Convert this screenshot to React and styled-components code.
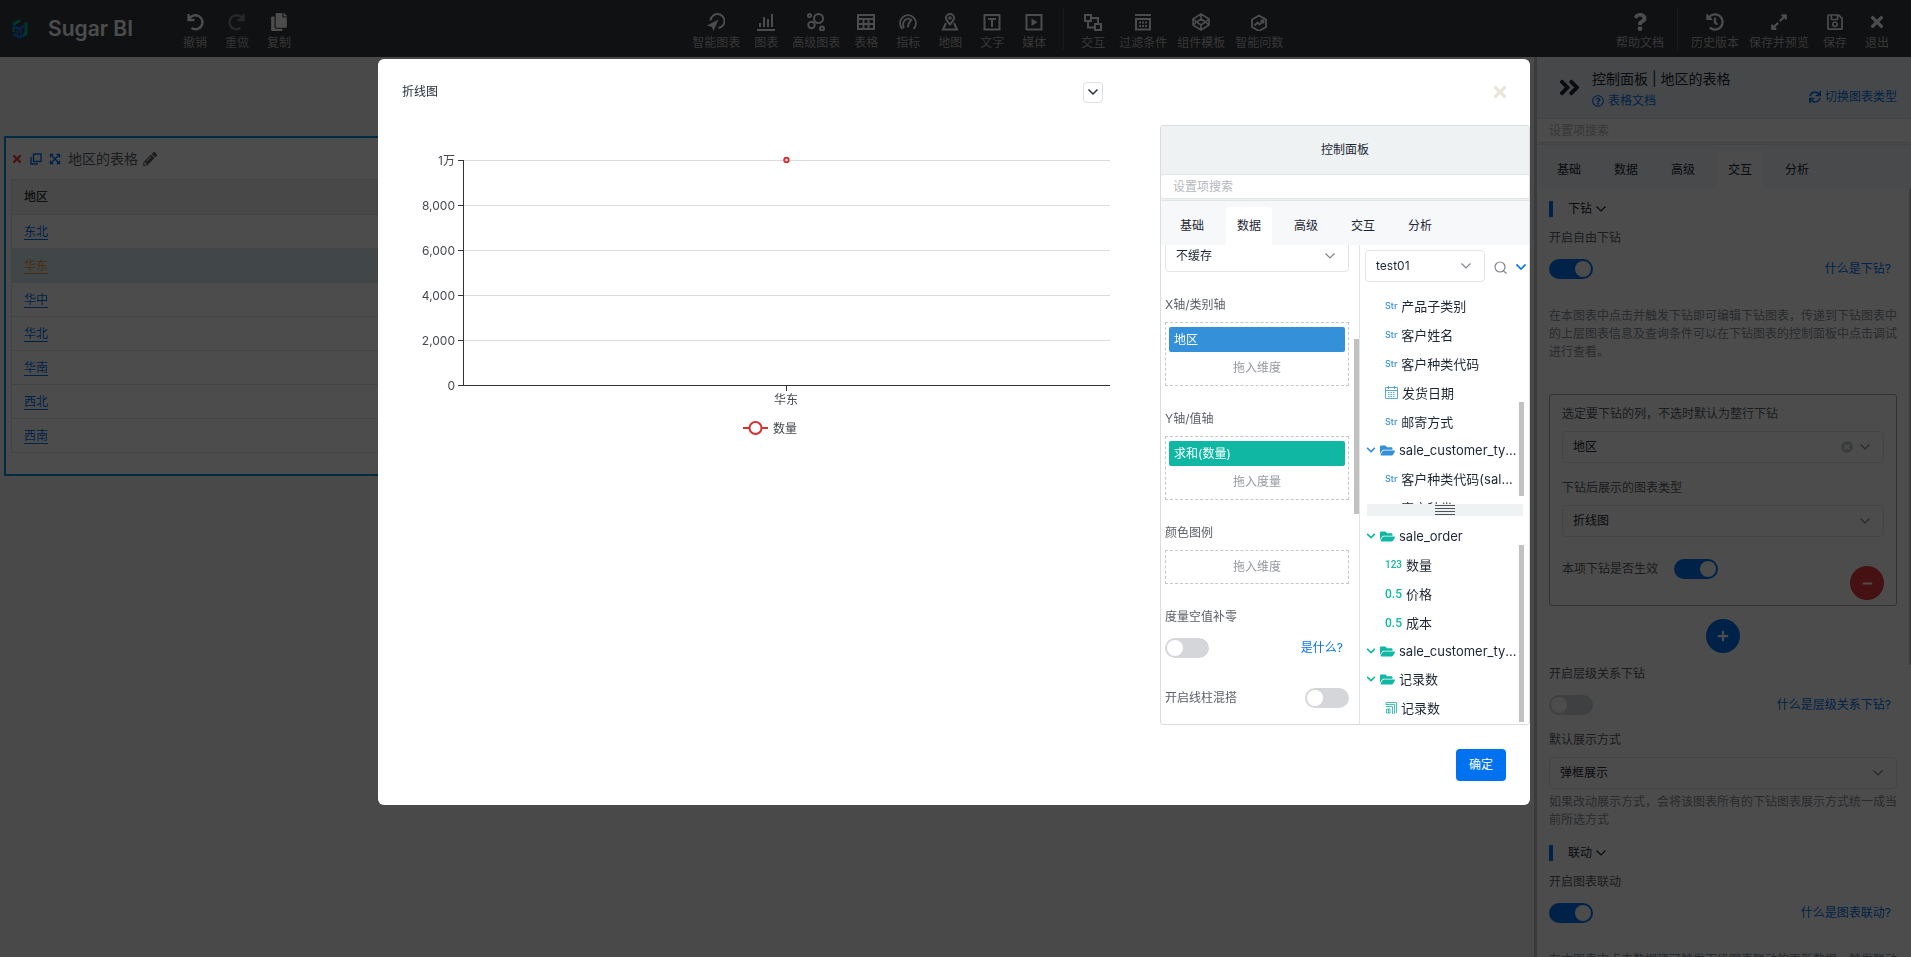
import styled, { createGlobalStyle, css } from 'styled-components';
import {
    FaAngleDoubleRight, FaChevronDown, FaCopy, FaExpandAlt, FaExpandArrowsAlt, FaFolderOpen, FaHistory,
    FaMinus, FaPencilAlt, FaPlus, FaQuestion, FaRegQuestionCircle, FaRegSave, FaSync, FaTimes, FaTimesCircle
} from 'react-icons/fa';

const GlobalStyle = createGlobalStyle`
    :root {
        --blue: #0072f0;
        --dim: #3490d8;
        --measure: #10b8a4;
        --text: #1d2633;
        --muted: #5c6067;
        --line: #e2e5e8;
        --fs-sm: 12px;
        --fs-md: 13px;
        --fs-lg: 14px;
    }

    *, *::before, *::after {
        box-sizing: border-box;
    }

    body {
        margin: 0;
        overflow: hidden;
        color: var(--text);
        font-family: Inter, 'Noto Sans CJK SC', sans-serif;
        font-size: var(--fs-sm);
        line-height: 18px;
    }

    button, input, select {
        margin: 0;
        padding: 0;
        border: 0;
        background: none;
        color: inherit;
        font: inherit;
    }

    a {
        color: var(--blue);
        text-decoration: none;
    }

    svg {
        display: block;
        flex: none;
    }
`;

const Page = styled.div`
    display: flex;
    flex-direction: column;
    height: 100vh;
    background: #f4f4f4;
`;

const TopBar = styled.header`
    display: flex;
    align-items: center;
    flex: none;
    height: 57px;
    padding: 0 13px 0 12px;
    background: #36393d;
    color: #fff;
`;

const Brand = styled.div`
    display: flex;
    align-items: center;
    gap: 20px;
    width: 162px;
    font-size: 21px;
    font-weight: 600;
    line-height: 26px;
    white-space: nowrap;
`;

const ToolGroup = styled.div`
    display: flex;
`;

const Gap = styled.div`
    flex: ${({ $grow }) => $grow} 1 0;
`;

const Tool = styled.button`
    display: flex;
    flex-direction: column;
    align-items: center;
    gap: 3px;
    min-width: 42px;
    padding: 7px 5px 0;
    color: ${({ $off }) => ($off ? '#888' : '#fff')};
    white-space: nowrap;

    svg {
        width: 18px;
        height: 18px;
    }
`;

const ToolLabel = styled.span`
    color: ${({ $off }) => ($off ? '#a4a4a4' : '#b8b8b8')};
`;

const ToolDivider = styled.span`
    width: 1px;
    height: 42px;
    margin: 0 8px;
    background: #595c60;
`;

const Main = styled.main`
    display: flex;
    flex: 1;
    min-height: 0;
`;

const Canvas = styled.section`
    flex: 1;
    min-width: 0;
    padding: 79px 12px 0 4px;
`;

const ChartCard = styled.article`
    height: 340px;
    padding: 10px 5px;
    border: 2px solid #0090e0;
    background: #fff;
`;

const CardHead = styled.div`
    display: flex;
    align-items: center;
    height: 21px;
    margin-bottom: 10px;
    font-size: var(--fs-lg);
    color: var(--muted);
`;

const IconButton = styled.button`
    display: flex;
    align-items: center;
    width: 19px;
    color: ${({ $color }) => $color};
`;

const CardTitle = styled.span`
    margin-right: 5px;
`;

const Table = styled.table`
    width: 100%;
    border: 1px solid #e4e4e4;
    border-collapse: collapse;

    th, td {
        height: 34px;
        padding: 0 12px;
        border-bottom: 1px solid #e4e4e4;
        text-align: left;
    }

    th {
        height: 35px;
        background: #f1f1f1;
        color: #333;
        font-weight: 500;
    }

    a {
        border-bottom: 1px solid currentColor;
    }
`;

const TableRow = styled.tr`
    ${({ $active }) => $active && css`
        background: #d9edf3;

        a {
            color: #f09a2c;
        }
    `}
`;

const SidePanel = styled.aside`
    display: flex;
    flex-direction: column;
    width: 377px;
    border-left: 3px solid #c6c6c6;
    background: #fff;
    overflow: hidden;
`;

const SideHead = styled.div`
    display: flex;
    align-items: center;
    flex: none;
    height: 61px;
    padding: 0 14px 0 20px;
    background: #eef2f3;
`;

const SideTitles = styled.div`
    flex: 1;
    padding: 2px 0 0 10px;
`;

const SideTitle = styled.h2`
    margin: 0 0 2px;
    font-size: var(--fs-lg);
    font-weight: 400;
    line-height: 22px;
`;

const IconLink = styled.a`
    display: flex;
    align-items: center;
    gap: 4px;
`;

const TypeLink = styled(IconLink)`
    align-self: flex-end;
    padding-bottom: 12px;
`;

const SearchRow = styled.div`
    flex: none;
    height: 27px;
    border-bottom: 1px solid var(--line);
    background: #eef2f3;
`;

const SearchInput = styled.input`
    display: block;
    width: 100%;
    height: 25px;
    padding: 0 12px;
    border: 1px solid var(--line);
    border-width: 1px 0;
    border-radius: 3px;
    background: #fff;

    &::placeholder {
        color: #b4b7bb;
    }
`;

const Tabs = styled.div`
    display: flex;
    align-items: flex-end;
    gap: 11px;
    flex: none;
    height: 44px;
    padding-left: ${({ $inset }) => $inset}px;
    background: #f6f8fa;
`;

const Tab = styled.button`
    height: 38px;
    padding: 0 11px;
    border-radius: 4px 4px 0 0;
    background: ${({ $active }) => ($active ? '#fff' : 'none')};
`;

const SideBody = styled.div`
    display: flex;
    flex: 1;
    min-height: 0;
    overflow: hidden;
`;

const SideContent = styled.div`
    flex: 1;
    padding: 12px 12px 0;
`;

const Thumb = styled.div`
    flex: none;
    width: ${({ $width }) => $width}px;
    height: ${({ $height }) => $height}px;
    margin-top: ${({ $top }) => $top}px;
    background: #c1c1c1;
`;

const SectionTitle = styled.button`
    display: flex;
    align-items: center;
    gap: 4px;
    height: 16px;
    margin-top: ${({ $top = 0 }) => $top}px;
    padding-left: 15px;
    border-left: 4px solid var(--blue);
    line-height: 16px;
`;

const Label = styled.label`
    display: block;
    margin-top: ${({ $top = 0 }) => $top}px;
    color: var(--muted);
    line-height: 20px;
`;

const Switch = styled.input`
    appearance: none;
    flex: none;
    width: 44px;
    height: 20px;
    padding: 2px;
    border-radius: 10px;
    background: #d4d6da;

    &::before {
        content: '';
        display: block;
        width: 16px;
        height: 16px;
        border-radius: 8px;
        background: #fff;
    }

    &:checked {
        background: var(--blue);
    }

    &:checked::before {
        margin-left: auto;
    }
`;

const SwitchRow = styled.div`
    display: flex;
    align-items: center;
    justify-content: space-between;
    height: 20px;
    margin-top: ${({ $top = 11 }) => $top}px;
    padding-right: ${({ $inset = 6 }) => $inset}px;
`;

const Hint = styled.p`
    margin: ${({ $top }) => $top}px 0 0;
    color: #8b9097;
`;

const SelectBox = styled.div`
    position: relative;
    display: flex;
    flex: none;
    width: ${({ $width }) => $width || 'auto'};
    margin-top: ${({ $top = 0 }) => $top}px;

    select {
        appearance: none;
        width: 100%;
        height: 32px;
        padding: 0 12px 0 10px;
        border: 1px solid var(--line);
        border-radius: 4px;
        background: #fff;
    }
`;

const SelectIcons = styled.span`
    position: absolute;
    top: 0;
    right: 14px;
    display: flex;
    align-items: center;
    gap: 7px;
    height: 32px;
    color: #80858c;
    pointer-events: none;
`;

const DrillBox = styled.fieldset`
    margin: 33px 0 13px;
    padding: 9px 12px 5px;
    border: 1px solid #a2a5a9;
    border-radius: 3px;
`;

const DrillFoot = styled.div`
    display: flex;
    gap: 16px;
    margin-top: 22px;
`;

const RoundButton = styled.button`
    display: flex;
    align-items: center;
    justify-content: center;
    width: 34px;
    height: 34px;
    margin: ${({ $margin }) => $margin};
    border-radius: 17px;
    background: ${({ $color }) => $color};
    color: #fff;
`;

const Overlay = styled.div`
    position: fixed;
    inset: 0;
    display: flex;
    justify-content: center;
    align-items: flex-start;
    padding: 59px 3px 0 0;
    background: rgba(0, 0, 0, .7);
`;

const Dialog = styled.div`
    display: flex;
    flex-direction: column;
    width: 90%;
    max-width: 1152px;
    border-radius: 6px;
    background: #fff;
    overflow: hidden;
`;

const DialogHead = styled.div`
    display: flex;
    align-items: center;
    height: 66px;
    padding: 0 21px 0 24px;
`;

const DialogTitle = styled.h2`
    flex: 1;
    margin: 0;
    font-size: var(--fs-sm);
    font-weight: 400;
`;

const FoldButton = styled.button`
    display: flex;
    align-items: center;
    justify-content: center;
    width: 20px;
    height: 21px;
    margin-right: 388px;
    border: 1px solid #dcdfe3;
    border-radius: 4px;
`;

const CloseButton = styled.button`
    display: flex;
    color: #ebe4d9;
`;

const DialogBody = styled.div`
    display: flex;
    justify-content: space-between;
`;

const ChartArea = styled.div`
    flex: 1;
    min-width: 0;
    padding: 0 30px 0 24px;

    svg {
        width: 100%;
    }

    text {
        font-size: var(--fs-sm);
        fill: #45494f;
    }
`;

const Config = styled.section`
    display: flex;
    flex-direction: column;
    width: 370px;
    border: 1px solid #d9dde0;
    border-radius: 3px;
    overflow: hidden;
`;

const ConfigHead = styled.h3`
    height: 48px;
    margin: 0;
    background: #eef2f3;
    font-size: var(--fs-sm);
    font-weight: 400;
    line-height: 48px;
    text-align: center;
`;

const ConfigBody = styled.div`
    display: flex;
    height: 479px;
    overflow: hidden;
`;

const Fields = styled.div`
    display: flex;
    width: 199px;
    border-right: 1px solid var(--line);
`;

/* the column is scrolled, so its first control is cut by the tabs */
const FieldList = styled.div`
    flex: 1;
    margin-top: -5px;
    padding: 0 5px 0 4px;
`;

const DropZone = styled.div`
    margin-top: 7px;
    padding: ${({ $empty }) => ($empty ? 0 : '4px 3px 1px')};
    border: 1px dashed #c4c7cb;
    color: #94989e;
    line-height: 32px;
    text-align: center;
`;

const Chip = styled.div`
    padding-left: 5px;
    border-radius: 2px;
    background: ${({ $color }) => $color};
    color: #fff;
    line-height: 25px;
    text-align: left;
`;

const DataColumn = styled.div`
    flex: 1;
    min-width: 0;
    padding: 5px 5px 0;
`;

const DataHead = styled.div`
    display: flex;
    align-items: center;
`;

const PlainButton = styled.button`
    display: flex;
    margin-left: 9px;
    padding-top: 2px;
    color: ${({ $color }) => $color};
`;

const TreePane = styled.div`
    display: flex;
    height: ${({ $height }) => $height}px;
    overflow: hidden;
`;

const Tree = styled.ul`
    flex: 1;
    min-width: 0;
    margin: 0;
    padding: ${({ $top }) => $top}px 0 0 1px;
    list-style: none;
`;

const Leaf = styled.li`
    display: flex;
    align-items: center;
    gap: 4px;
    height: 29px;
    padding: 0 4px 0 19px;
    color: ${({ $color }) => $color};
    font-size: var(--fs-md);
`;

const Folder = styled.li`
    display: flex;
    align-items: center;
    gap: 4px;
    height: 28px;
    color: ${({ $color }) => $color};
    font-size: var(--fs-md);
`;

const Name = styled.span`
    color: var(--text);
    overflow: hidden;
    text-overflow: ellipsis;
    white-space: nowrap;
`;

const TypeTag = styled.span`
    flex: none;
    font-family: ${({ $font = 'Roboto' }) => $font}, sans-serif;
    font-size: ${({ $size }) => $size}px;
    font-weight: 500;
`;

const Splitter = styled.div`
    display: flex;
    align-items: center;
    justify-content: center;
    height: 12px;
    margin: 0 1px 0 2px;
    background: #eef2f3;
    color: #4f5358;
`;

const DialogFoot = styled.div`
    display: flex;
    justify-content: flex-end;
    padding: 24px;
`;

const PrimaryButton = styled.button`
    width: 50px;
    height: 32px;
    border-radius: 4px;
    background: var(--blue);
    color: #fff;
`;

const Line = ({ size = 18, width = 2, box = 18, children }) => (
    <svg width={size} height={size} viewBox={`0 0 ${box} ${box}`} fill="none" stroke="currentColor" strokeWidth={width}>
        {children}
    </svg>
);

const Down = ({ size = 10, width = 1.2 }) => (
    <svg width={size} height={size * .6} viewBox="0 0 10 6" fill="none" stroke="currentColor" strokeWidth={width}>
        <path d="M.5 .5 5 5 9.500 .5" />
    </svg>
);

const Logo = () => (
    <svg width="16" height="20" viewBox="0 0 16 20" fill="none">
        <path d="M1 5.500 8 1.500" stroke="#00c07a" strokeWidth="3" />
        <path d="M14 3.500V14.500L10.500 17" stroke="#00b98a" strokeWidth="3" />
        <path d="M1.500 9v4" stroke="#00c07a" strokeWidth="2" />
        <path d="M1 7 7.500 10 12.500 6.500" stroke="#1772e8" strokeWidth="2.600" />
        <path d="M1 14.500 7.500 18.200 11.500 16" stroke="#1772e8" strokeWidth="3" />
        <path d="M5.500 10.500v4.500M9 10.500v4.500" stroke="#1772e8" strokeWidth="2" />
    </svg>
);

const UndoIcon = () => <Line width={2.4}><path d="M2.500 1v6h6M3 6.500A7 7 0 1 1 5.500 15" /></Line>;
const RedoIcon = () => <Line width={2.4}><path d="M15.500 1v6h-6M15 6.500A7 7 0 1 0 12.500 15" /></Line>;
const SmartChartIcon = () => (
    <Line>
        <path d="M3.500 7.500A7 7 0 1 1 11.500 15" />
        <path d="M11.500 6.500 6.500 18 5 14 0 12.500Z" fill="currentColor" stroke="none" />
    </Line>
);
const BarsIcon = () => <Line><path d="M0 17h18M3 14v-4M7 14V4M11 14V6M15 14V1" /></Line>;
const BubblesIcon = () => (
    <Line>
        <circle cx="11.500" cy="5.500" r="4.500" />
        <circle cx="2.500" cy="2.500" r="1.500" />
        <circle cx="4.500" cy="12" r="3.200" />
        <circle cx="15" cy="15.500" r="2" />
    </Line>
);
const TableIcon = () => <Line><path d="M1 2h16v14H1zM1 6h16M1 11h16M6.500 6V16M11.500 6V16" /></Line>;
const GaugeIcon = () => (
    <Line width={1.8}>
        <path d="M3.500 16A8 8 0 1 1 14.500 16M5 15A7 7 0 0 1 6 7C8 5 11 5 13 7.500" />
        <path d="M12.500 6.500C10 9 9 11 9 14.500" />
    </Line>
);
const MapIcon = () => (
    <Line>
        <path d="M9 11.500C6 8 5 6.500 5 5a4 4 0 0 1 8 0C13 6.500 12 8 9 11.500Z" />
        <path d="M5 10 2 16.500h14L13 10" />
        <circle cx="9" cy="5" r=".8" />
    </Line>
);
const TextIcon = () => <Line><path d="M1.500 2h15v14.500h-15zM5 6h8M9 6v8" /></Line>;
const MediaIcon = () => (
    <Line>
        <path d="M1.500 2h15v14.500h-15z" />
        <path d="M6.500 5.500v7.500l6-3.800z" fill="currentColor" stroke="none" />
    </Line>
);
const LinkIcon = () => <Line><path d="M1 2h6v6H1zM11 11h6v6h-6zM8 5h6v5M4 9v5.500h6" /></Line>;
const FilterIcon = () => (
    <Line>
        <path d="M1 2h16M2 6h14v10.500H2z" />
        <path d="M5 9.500h2M8 9.500h2M11 9.500h2M5 13h2M8 13h2M11 13h2" />
    </Line>
);
const ModuleIcon = () => (
    <Line width={1.6}>
        <path d="M9 1l8 5v6l-8 5-8-5V6zM9 1v5M9 12v5M9 6l4.500 3L9 12 4.500 9zM1 6l3.500 3L1 12M17 6l-3.500 3 3.500 3" />
    </Line>
);
const AskIcon = () => (
    <Line width={1.8}><path d="M9 2.500l7 4v7.500l-7 4-7-4V6.500zM4.500 12.500l3-3 2 2 4-4M10.500 7.500h3v3" /></Line>
);
const DuplicateIcon = () => <Line size={12} box={12} width={1.4}><path d="M3.500 1h7.500v7.500H3.500zM1 4v7h7" /></Line>;
const SearchIcon = () => <Line size={13} box={13} width={1.2}><circle cx="6" cy="6" r="5" /><path d="M9.500 10l3 2.500" /></Line>;
const CalendarIcon = () => (
    <Line size={13} box={13} width={.8}>
        <path d="M.5 1.500h12v11H.5zM.5 4.500h12M3.500 0v3M9.500 0v3" />
        <path d="M3 6.500h7M3 8.500h7M3 10.500h7" strokeDasharray="1.500 1" />
    </Line>
);
const CountIcon = () => (
    <Line size={12} box={12} width={.8}>
        <path d="M1 3V.5h10.500V11M1 4.500h6.500V12M1 2.500h8.500V12M1.500 7H5v4H1.500zM3.500 7v4" />
    </Line>
);
const GripIcon = () => <Line size={20} box={20} width={1.2}><path d="M0 5.500h20M0 8.500h20M0 11.500h20M0 14.500h20" /></Line>;

const editTools = [
    { label: '撤销', icon: UndoIcon },
    { label: '重做', icon: RedoIcon, off: true },
    { label: '复制', icon: FaCopy }
];

const chartTools = [
    { label: '智能图表', icon: SmartChartIcon },
    { label: '图表', icon: BarsIcon },
    { label: '高级图表', icon: BubblesIcon },
    { label: '表格', icon: TableIcon },
    { label: '指标', icon: GaugeIcon },
    { label: '地图', icon: MapIcon },
    { label: '文字', icon: TextIcon },
    { label: '媒体', icon: MediaIcon }
];

const pageTools = [
    { label: '交互', icon: LinkIcon },
    { label: '过滤条件', icon: FilterIcon },
    { label: '组件模板', icon: ModuleIcon },
    { label: '智能问数', icon: AskIcon }
];

const saveTools = [
    { label: '历史版本', icon: FaHistory },
    { label: '保存并预览', icon: FaExpandAlt },
    { label: '保存', icon: FaRegSave },
    { label: '退出', icon: FaTimes }
];

const regions = ['东北', '华东', '华中', '华北', '华南', '西北', '西南'];
const tabs = ['基础', '数据', '高级', '交互', '分析'];

const dimensions = [
    { name: '产品子类别', type: 'str' },
    { name: '客户姓名', type: 'str' },
    { name: '客户种类代码', type: 'str' },
    { name: '发货日期', type: 'date' },
    { name: '邮寄方式', type: 'str' },
    { name: 'sale_customer_type', type: 'folder' },
    { name: '客户种类代码(sale_customer_type)', type: 'str' },
    { name: '客户种类', type: 'str' }
];

const measures = [
    { name: 'sale_order', type: 'folder' },
    { name: '数量', type: 'int' },
    { name: '价格', type: 'float' },
    { name: '成本', type: 'float' },
    { name: 'sale_customer_type', type: 'folder' },
    { name: '记录数', type: 'folder' },
    { name: '记录数', type: 'count' }
];

const Tools = ({ items }) => (
    <ToolGroup>
        {items.map(({ label, icon: Icon, off }) => (
            <Tool key={label} type="button" $off={off}>
                <Icon />
                <ToolLabel $off={off}>{label}</ToolLabel>
            </Tool>
        ))}
    </ToolGroup>
);

const TabBar = ({ active, inset = 9 }) => (
    <Tabs role="tablist" $inset={inset}>
        {tabs.map(tab => (
            <Tab key={tab} type="button" role="tab" aria-selected={tab === active} $active={tab === active}>{tab}</Tab>
        ))}
    </Tabs>
);

const Select = ({ id, value, label, clear, top, width }) => (
    <SelectBox $top={top} $width={width}>
        <select id={id} aria-label={label} defaultValue={value}>
            <option>{value}</option>
        </select>
        <SelectIcons>
            {clear && <FaTimesCircle size={12} color="#c3c7cb" />}
            <Down />
        </SelectIcons>
    </SelectBox>
);

const TypeIcon = ({ type }) => {
    if (type === 'date') return <CalendarIcon />;
    if (type === 'count') return <CountIcon />;
    if (type === 'int') return <TypeTag $size={10}>123</TypeTag>;
    if (type === 'float') return <TypeTag $size={12}>0.5</TypeTag>;
    return <TypeTag $size={9} $font="Inter">Str</TypeTag>;
};

const DataTree = ({ items, color, top }) => (
    <Tree $top={top}>
        {items.map(({ name, type }, i) => (
            type === 'folder' ? (
                <Folder key={i} $color={color}>
                    <FaChevronDown size={10} />
                    <FaFolderOpen size={15} />
                    <Name>{name}</Name>
                </Folder>
            ) : (
                <Leaf key={i} $color={color}>
                    <TypeIcon type={type} />
                    <Name>{name}</Name>
                </Leaf>
            )
        ))}
    </Tree>
);

const ticks = ['1万', '8,000', '6,000', '4,000', '2,000', '0'];

const LineChart = () => (
    <svg viewBox="0 0 728 330" role="img" aria-label="折线图">
        {ticks.map((tick, i) => {
            const y = 35.5 + i * 45;
            const isAxis = i === ticks.length - 1;
            return (
                <g key={tick}>
                    <path d={`M61 ${y}H708`} stroke={isAxis ? '#333' : '#dcdcde'} />
                    <path d={`M56 ${y}h5`} stroke="#333" />
                    <text x="53" y={y + 4} textAnchor="end">{tick}</text>
                </g>
            );
        })}
        <path d="M61.500 35V261M384.500 261v5" stroke="#333" />
        <text x="384" y="279" textAnchor="middle">华东</text>
        <circle cx="384.500" cy="35" r="2.200" fill="#fff" stroke="#d6302f" strokeWidth="2" />
        <path d="M341 303h25" stroke="#d6302f" strokeWidth="2" />
        <circle cx="353.500" cy="303" r="6" fill="#fff" stroke="#d6302f" strokeWidth="2" />
        <text x="371" y="308">数量</text>
    </svg>
);

const TableCard = () => (
    <ChartCard>
        <CardHead>
            <IconButton type="button" aria-label="删除" $color="#e8403c"><FaTimes size={12} /></IconButton>
            <IconButton type="button" aria-label="复制图表" $color="var(--blue)"><DuplicateIcon /></IconButton>
            <IconButton type="button" aria-label="移动" $color="var(--blue)"><FaExpandArrowsAlt size={12} /></IconButton>
            <CardTitle>地区的表格</CardTitle>
            <FaPencilAlt size={14} />
        </CardHead>
        <Table>
            <thead>
                <tr><th>地区</th></tr>
            </thead>
            <tbody>
                {regions.map(region => (
                    <TableRow key={region} $active={region === '华东'}>
                        <td><a href="#region">{region}</a></td>
                    </TableRow>
                ))}
            </tbody>
        </Table>
    </ChartCard>
);

const InteractionPanel = () => (
    <SidePanel>
        <SideHead>
            <FaAngleDoubleRight size={25} />
            <SideTitles>
                <SideTitle>控制面板 | 地区的表格</SideTitle>
                <IconLink href="#doc"><FaRegQuestionCircle size={12} />表格文档</IconLink>
            </SideTitles>
            <TypeLink href="#type"><FaSync size={12} />切换图表类型</TypeLink>
        </SideHead>
        <SearchRow><SearchInput aria-label="设置项搜索" placeholder="设置项搜索" /></SearchRow>
        <TabBar active="交互" />
        <SideBody>
            <SideContent>
                <SectionTitle type="button">下钻<Down /></SectionTitle>
                <Label htmlFor="free-drill" $top={11}>开启自由下钻</Label>
                <SwitchRow>
                    <Switch id="free-drill" type="checkbox" defaultChecked />
                    <a href="#drill">什么是下钻?</a>
                </SwitchRow>
                <Hint $top={28}>
                    在本图表中点击并触发下钻即可编辑下钻图表，传递到下钻图表中的上层图表信息及查询条件可以在下钻图表的控制面板中点击调试进行查看。
                </Hint>
                <DrillBox>
                    <Label htmlFor="drill-column">选定要下钻的列，不选时默认为整行下钻</Label>
                    <Select id="drill-column" value="地区" top={7} clear />
                    <Label htmlFor="drill-chart" $top={15}>下钻后展示的图表类型</Label>
                    <Select id="drill-chart" value="折线图" top={7} />
                    <DrillFoot>
                        <Label htmlFor="drill-on">本项下钻是否生效</Label>
                        <Switch id="drill-on" type="checkbox" defaultChecked />
                        <RoundButton type="button" aria-label="删除下钻" $color="#e83a3e" $margin="7px 0 0 auto">
                            <FaMinus size={11} />
                        </RoundButton>
                    </DrillFoot>
                </DrillBox>
                <RoundButton type="button" aria-label="添加下钻" $color="var(--blue)" $margin="0 auto">
                    <FaPlus size={12} />
                </RoundButton>
                <Label htmlFor="level-drill" $top={11}>开启层级关系下钻</Label>
                <SwitchRow>
                    <Switch id="level-drill" type="checkbox" />
                    <a href="#level">什么是层级关系下钻?</a>
                </SwitchRow>
                <Label htmlFor="display-mode" $top={15}>默认展示方式</Label>
                <Select id="display-mode" value="弹框展示" top={7} />
                <Hint $top={4}>如果改动展示方式，会将该图表所有的下钻图表展示方式统一成当前所选方式</Hint>
                <SectionTitle type="button" $top={16}>联动<Down /></SectionTitle>
                <Label htmlFor="chart-link" $top={11}>开启图表联动</Label>
                <SwitchRow>
                    <Switch id="chart-link" type="checkbox" defaultChecked />
                    <a href="#link">什么是图表联动?</a>
                </SwitchRow>
                <Hint $top={28}>在本图表中点击数据项可触发下级图表联动的更新数据，触发联动</Hint>
            </SideContent>
            <Thumb $width={2} $height={476} $top={0} />
        </SideBody>
    </SidePanel>
);

const DataPanel = () => (
    <Config>
        <ConfigHead>控制面板</ConfigHead>
        <SearchRow><SearchInput aria-label="设置项搜索" placeholder="设置项搜索" /></SearchRow>
        <TabBar active="数据" inset={8} />
        <ConfigBody>
            <Fields>
                <FieldList>
                    <Select label="缓存" value="不缓存" />
                    <Label as="div" $top={23}>X轴/类别轴</Label>
                    <DropZone><Chip $color="var(--dim)">地区</Chip>拖入维度</DropZone>
                    <Label as="div" $top={23}>Y轴/值轴</Label>
                    <DropZone><Chip $color="var(--measure)">求和(数量)</Chip>拖入度量</DropZone>
                    <Label as="div" $top={23}>颜色图例</Label>
                    <DropZone $empty>拖入维度</DropZone>
                    <Label htmlFor="fill-zero" $top={23}>度量空值补零</Label>
                    <SwitchRow>
                        <Switch id="fill-zero" type="checkbox" />
                        <a href="#zero">是什么?</a>
                    </SwitchRow>
                    <SwitchRow $top={30} $inset={0}>
                        <Label htmlFor="mix-bar">开启线柱混搭</Label>
                        <Switch id="mix-bar" type="checkbox" />
                    </SwitchRow>
                </FieldList>
                <Thumb $width={5} $height={175} $top={94} />
            </Fields>
            <DataColumn>
                <DataHead>
                    <Select label="数据模型" value="test01" width="120px" />
                    <PlainButton type="button" aria-label="搜索" $color="#80858c"><SearchIcon /></PlainButton>
                    <PlainButton type="button" aria-label="展开" $color="var(--blue)"><Down width={1.6} /></PlainButton>
                </DataHead>
                <TreePane $height={222}>
                    <DataTree items={dimensions} color="var(--dim)" top={9} />
                    <Thumb $width={5} $height={94} $top={120} />
                </TreePane>
                <Splitter><GripIcon /></Splitter>
                <TreePane $height={207}>
                    <DataTree items={measures} color="var(--measure)" top={6} />
                    <Thumb $width={5} $height={177} $top={29} />
                </TreePane>
            </DataColumn>
        </ConfigBody>
    </Config>
);

const App = () => (
    <>
        <GlobalStyle />
        <Page>
            <TopBar>
                <Brand><Logo />Sugar BI</Brand>
                <Tools items={editTools} />
                <Gap $grow={6} />
                <Tools items={chartTools} />
                <ToolDivider />
                <Tools items={pageTools} />
                <Gap $grow={5} />
                <Tools items={[{ label: '帮助文档', icon: FaQuestion }]} />
                <ToolDivider />
                <Tools items={saveTools} />
            </TopBar>
            <Main>
                <Canvas><TableCard /></Canvas>
                <InteractionPanel />
            </Main>
        </Page>
        <Overlay>
            <Dialog role="dialog" aria-modal="true" aria-labelledby="dialog-title">
                <DialogHead>
                    <DialogTitle id="dialog-title">折线图</DialogTitle>
                    <FoldButton type="button" aria-label="折叠"><Down width={1.4} /></FoldButton>
                    <CloseButton type="button" aria-label="关闭"><FaTimes size={18} /></CloseButton>
                </DialogHead>
                <DialogBody>
                    <ChartArea><LineChart /></ChartArea>
                    <DataPanel />
                </DialogBody>
                <DialogFoot><PrimaryButton type="button">确定</PrimaryButton></DialogFoot>
            </Dialog>
        </Overlay>
    </>
);

export default App;
